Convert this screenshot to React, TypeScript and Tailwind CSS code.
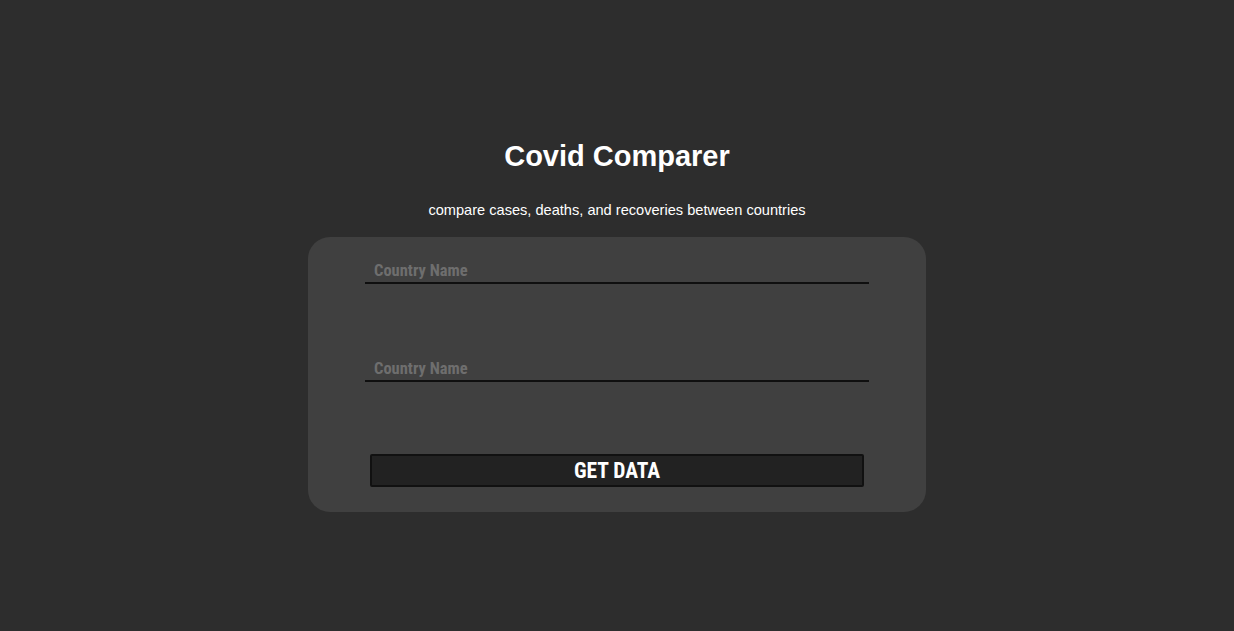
import { useState } from "react";

const condensed = {
    fontFamily:
        '"Roboto Condensed", "Liberation Sans Narrow", "DejaVu Sans Condensed", Roboto, sans-serif',
};

function CountryInput({
    value,
    onChange,
}: {
    value: string;
    onChange: (v: string) => void;
}) {
    return (
        <input
            type="text"
            value={value}
            onChange={(e) => onChange(e.target.value)}
            placeholder="Country Name"
            style={condensed}
            className="w-full border-b-2 border-b-[#0f0f0f] bg-transparent px-[9px] pb-[1px] text-[16.5px] font-bold leading-[20px] text-white outline-none placeholder:text-[#6e6e6e] [font-stretch:condensed]"
        />
    );
}

function App() {
    const [first, setFirst] = useState("");
    const [second, setSecond] = useState("");

    return (
        <div
            className="flex min-h-screen w-full flex-col items-center bg-[#2d2d2d] pt-[140px]"
            style={{ fontFamily: '"Liberation Sans", Arial, sans-serif' }}
        >
            <h1 className="text-[29px] font-bold leading-[32px] text-white">
                Covid Comparer
            </h1>
            <p className="mt-[30px] text-[14.6px] leading-[17px] text-white">
                compare cases, deaths, and recoveries between countries
            </p>
            <div className="mt-[18px] flex h-[275px] w-[618px] flex-col rounded-[22px] bg-[#404040] px-[57px] pt-[24px]">
                <CountryInput value={first} onChange={setFirst} />
                <div className="mt-[73px]">
                    <CountryInput value={second} onChange={setSecond} />
                </div>
                <button
                    style={condensed}
                    className="mx-[5px] mt-[72px] h-[33px] cursor-pointer rounded-[2px] border-2 border-[#111111] bg-[#222222] text-[21.5px] font-bold leading-[24px] text-white [font-stretch:condensed]"
                >
                    GET DATA
                </button>
            </div>
        </div>
    );
}

export default App;
